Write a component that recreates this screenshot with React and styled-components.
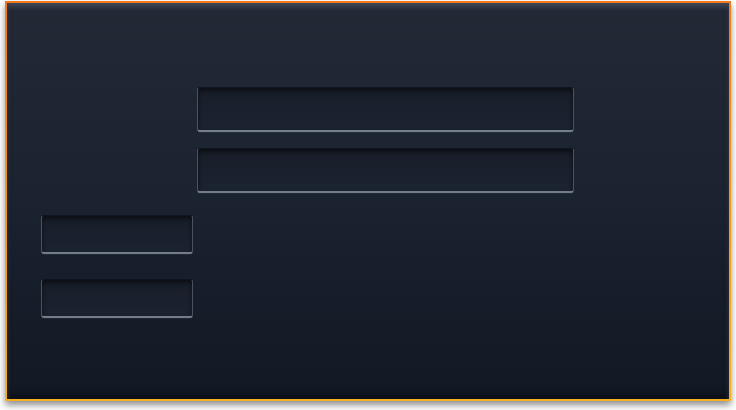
import React from "react"
import styled, { createGlobalStyle } from "styled-components"

const Global = createGlobalStyle`
  html, body {
    margin: 0;
    padding: 0;
    background: #fff;
    font-family: "Liberation Sans", Arial, sans-serif;
  }
`

const Page = styled.div`
  width: 736px;
  height: 410px;
  padding: 1px 5px 0 5px;
  box-sizing: border-box;
`

const Panel = styled.div`
  width: 726px;
  height: 400px;
  box-sizing: border-box;
  border: 2px solid;
  border-image: linear-gradient(180deg, #f37a1c 0%, #f59a1e 60%, #f8b020 100%) 1;
  background: linear-gradient(180deg, #232a36 0%, #1b2230 50%, #121924 100%);
  box-shadow: 0 4px 7px rgba(0, 0, 0, 0.45), inset 0 4px 5px rgba(120, 130, 145, 0.35),
    inset 0 -6px 6px rgba(0, 0, 0, 0.35);
  display: flex;
  flex-direction: column;
  padding: 84px 0 0 0;
`

const Group = styled.div`
  display: flex;
  flex-direction: column;
  gap: ${(p) => p.gap}px;
  margin-left: ${(p) => p.offset}px;
  margin-top: ${(p) => p.top || 0}px;
`

const Field = styled.div`
  width: ${(p) => p.w}px;
  height: ${(p) => p.h}px;
  box-sizing: border-box;
  border-radius: 3px;
  background: linear-gradient(180deg, #181e29 0%, #1c2331 100%);
  border: 1px solid #10151d;
  border-bottom: 2px solid #747d8a;
  border-left-color: #4a525e;
  border-right-color: #4a525e;
  box-shadow: inset 0 3px 5px rgba(0, 0, 0, 0.55), 0 1px 0 rgba(255, 255, 255, 0.04);
`

export default function App() {
  return (
    <Page>
      <Global />
      <Panel>
        <Group offset={190} gap={16}>
          <Field w={377} h={45} />
          <Field w={377} h={45} />
        </Group>
        <Group offset={34} gap={25} top={22}>
          <Field w={152} h={39} />
          <Field w={152} h={39} />
        </Group>
      </Panel>
    </Page>
  )
}
